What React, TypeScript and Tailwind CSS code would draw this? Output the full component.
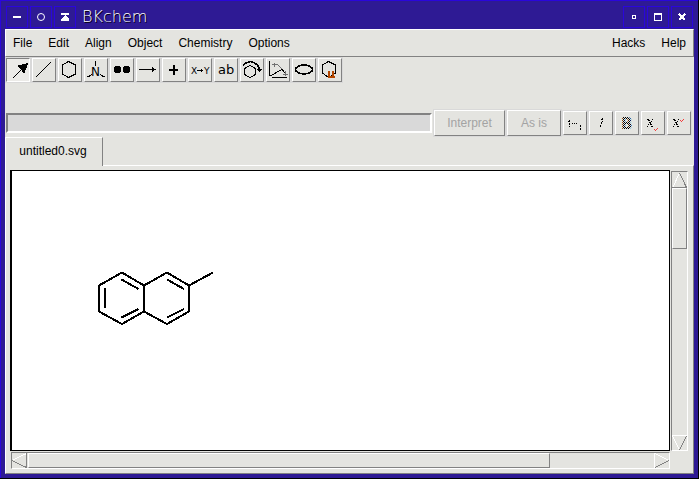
import React from "react";

type Children = { children?: React.ReactNode };

const raised = "border border-t-white border-l-white border-r-[#828282] border-b-[#828282]";
const sunken = "border border-t-[#828282] border-l-[#828282] border-r-white border-b-white";
const halo = "shadow-[0_0_0_1px_#d9d9d9]";

function TitleButton({ label, children }: Children & { label: string }) {
  return (
    <button aria-label={label} className="size-[22px] shrink-0 border border-[#2a06dc]">
      <svg viewBox="0 0 20 20" className="size-5" fill="none" stroke="white" shapeRendering="crispEdges">
        {children}
      </svg>
    </button>
  );
}

function ToolButton({ label, pressed = false, children }: Children & { label: string; pressed?: boolean }) {
  return (
    <button aria-label={label} aria-pressed={pressed} className={`size-6 shrink-0 ${halo} ${pressed ? sunken + " bg-[#ecebe8]" : raised}`}>
      <svg viewBox="0 0 22 22" className="size-[22px]" fill="none" stroke="black" shapeRendering="crispEdges">
        {children}
      </svg>
    </button>
  );
}

function IconText({ x, y, size, fill = "black", bold = false, children }: Children & { x: number; y: number; size: number; fill?: string; bold?: boolean }) {
  return (
    <text x={x} y={y} fontSize={size} fill={fill} stroke="none" fontWeight={bold ? 700 : 400} fontFamily="DejaVu Sans, sans-serif">
      {children}
    </text>
  );
}

function MenuItem({ children }: Children) {
  return <button className="h-6 px-[7px]">{children}</button>;
}

function Toolbar() {
  return (
    <div role="toolbar" className="flex h-[53px] items-start gap-[2px] pt-px pl-px">
      <ToolButton label="Edit" pressed>
        <path d="M5.5 19.5 L15 10" />
        <path d="M20.5 4.5 L11 7 L13 9 L15 11 L17 14 Z" fill="black" />
      </ToolButton>
      <ToolButton label="Draw bond">
        <path d="M3 18 L18 3" />
      </ToolButton>
      <ToolButton label="Template">
        <path d="M9.5 2.5 L16.5 6 V15 L9.5 18.5 L3.5 15 V6 Z" />
      </ToolButton>
      <ToolButton label="Atom">
        <path d="M10.5 2 V7" />
        <IconText x={6} y={17} size={12}>N</IconText>
        <path d="M2 18 L7 15.5 M2 17.5 H5 M4 16.5 H6 M15 15.5 L20 18 M17 17.5 H20 M16 16.5 H18" />
      </ToolButton>
      <ToolButton label="Mark">
        <g fill="black" stroke="none">
          <circle cx="6.5" cy="10.5" r="3.7" />
          <circle cx="15.5" cy="10.5" r="3.7" />
        </g>
      </ToolButton>
      <ToolButton label="Arrow">
        <path d="M2 10.5 H18" />
        <path d="M15 8 L19 10.5 L15 13 Z" fill="black" stroke="none" />
      </ToolButton>
      <ToolButton label="Plus">
        <path d="M6 11 H15 M11 6 V16" strokeWidth="2" />
      </ToolButton>
      <ToolButton label="Reaction">
        <IconText x={2} y={15} size={9}>X</IconText>
        <IconText x={15} y={15} size={9}>Y</IconText>
        <path d="M8 11.5 H14 M12.5 10 V13" />
      </ToolButton>
      <ToolButton label="Text">
        <IconText x={3} y={15} size={13}>ab</IconText>
      </ToolButton>
      <ToolButton label="Rotate">
        <path d="M9 6.5 L14.5 9.5 V15.5 L9 18.5 L3.5 15.5 V9.5 Z" />
        <path d="M2 6.5 C5 2.5 10 2 13 3.5 Q17 5.5 18.5 10" strokeWidth="1.5" />
        <path d="M16 10 H21 L18.5 13 Z" fill="black" stroke="none" />
      </ToolButton>
      <ToolButton label="Bond align">
        <path d="M2.5 2 V17 M5 18.5 H20 M3 17 L15 10.5 L19 15" />
        <path d="M5 5.5 H10 Q13 7 14.5 10 M18.5 12 V17 M16 15.5 H21 M7.5 4 V8" stroke="#707070" />
      </ToolButton>
      <ToolButton label="Vector graphics">
        <ellipse cx="11" cy="10.5" rx="8.5" ry="4.5" strokeWidth="1.5" />
      </ToolButton>
      <ToolButton label="User templates">
        <path d="M9.5 2.5 L16.5 6 V14 L9.5 18.5 L3.5 14 V6 Z" />
        <path d="M10 12 V18 H14 V12 M13 18 H16" stroke="#b54700" strokeWidth="2" />
      </ToolButton>
    </div>
  );
}

function EditRow() {
  const action = `h-[26px] shrink-0 text-[#a3a3a3] ${halo} ${raised}`;
  return (
    <div className="flex h-[26px] items-center gap-[2px] pl-px pr-[3px]">
      <input aria-label="Edit text" className="h-5 min-w-0 flex-1 border-2 border-t-[#828282] border-l-[#828282] border-r-white border-b-white bg-[#d9d9d9] outline-none" />
      <button className={`w-[71px] ${action}`}>Interpret</button>
      <button className={`w-[54px] ${action}`}>As is</button>
      <ToolButton label="Number">
        <path d="M5.5 8 V15 M4 9.5 H6 M16.5 13 V19" strokeDasharray="2 1" />
        <path d="M8 11.5 H14" strokeDasharray="1 1" />
      </ToolButton>
      <ToolButton label="Italic">
        <path d="M12.5 6 V10 M11.5 10 V13 M10.5 13 V16 M11 7.5 H13" strokeDasharray="2 1" />
      </ToolButton>
      <ToolButton label="Bold">
        <defs>
          <pattern id="stipple" width="2" height="2" patternUnits="userSpaceOnUse">
            <path d="M0 0 H1 V1 H0 Z M1 1 H2 V2 H1 Z" fill="black" stroke="none" />
          </pattern>
        </defs>
        <IconText x={5} y={17} size={15} fill="url(#stipple)" bold>B</IconText>
      </ToolButton>
      <ToolButton label="Subscript">
        <path d="M5 7.5 H7 M6 8.5 H8 M7 10.5 H9 M8 12.5 H10 M9 14.5 H11 M10 7.5 H11 M9 9.5 H10 M8 11.5 H9 M6 12.5 H7 M5 14.5 H6" />
        <path d="M12 17.5 H13 M13 18.5 H14 M14 17.5 H15 M15 16.5 H16" stroke="#f43c3c" />
      </ToolButton>
      <ToolButton label="Superscript">
        <path d="M5 7.5 H7 M6 8.5 H8 M7 10.5 H9 M8 12.5 H10 M9 14.5 H11 M10 7.5 H11 M9 9.5 H10 M8 11.5 H9 M6 12.5 H7 M5 14.5 H6" />
        <path d="M12 8.5 H13 M13 9.5 H14 M14 8.5 H15 M15 7.5 H16" stroke="#f43c3c" />
      </ToolButton>
    </div>
  );
}

function ScrollArrow({ label, light, dark, box }: { label: string; light: string; dark: string; box: string }) {
  return (
    <button aria-label={label} className={`shrink-0 ${box}`}>
      <svg viewBox="0 0 15 15" className="size-[15px]" fill="none" shapeRendering="crispEdges">
        <path d={light} stroke="white" />
        <path d={dark} stroke="#828282" />
      </svg>
    </button>
  );
}

function Drawing() {
  return (
    <svg role="img" aria-label="2-methylnaphthalene" viewBox="12 171 230 170" className="h-[170px] w-[230px]" fill="none" stroke="black" strokeWidth="2" shapeRendering="crispEdges">
      <path d="M99 285.5 L122 272.5 L144 285.5 V311.5 L122 324 L99 311.5 Z" />
      <path d="M144 285.5 L167 272.5 L189 285.5 V311.5 L167 324 L144 311.5 M189 285.5 L213 272.5" />
      <path d="M105 288 V308 M121.5 279.5 L138.5 289 M121.5 317.5 L138.5 309 M167 279.5 L184 289 M167 317.5 L184 309" />
    </svg>
  );
}

export default function App() {
  return (
    <div className="flex h-screen flex-col border-r border-b border-black bg-[#2e1a94] font-['Liberation_Sans',Arial,sans-serif] text-xs text-black">
      <div className="flex min-h-0 flex-1 flex-col border-t border-l border-[#2a06dc] pr-1 pb-1 pl-1">
        <header className="flex h-7 shrink-0 items-center gap-[2px] pt-[3px] pr-px pl-px">
          <TitleButton label="Window menu">
            <path d="M6 10 H14" strokeWidth="2" />
          </TitleButton>
          <TitleButton label="Sticky">
            <circle cx="10" cy="10" r="3.5" shapeRendering="auto" />
          </TitleButton>
          <TitleButton label="Shade">
            <path d="M6 7 H14" strokeWidth="2" />
            <path d="M10 8 L14 12 V14 H6 V12 Z" fill="white" stroke="none" />
          </TitleButton>
          <h1 className="flex-1 pl-1 font-['DejaVu_Sans_Light','DejaVu_Sans',sans-serif] text-base leading-5 font-extralight text-white [text-shadow:1px_1px_0_black]">BKchem</h1>
          <TitleButton label="Minimize">
            <path d="M8.5 8.5 H11.5 V11.5 H8.5 Z" />
          </TitleButton>
          <TitleButton label="Maximize">
            <path d="M6.5 6.5 H13.5 V13.5 H6.5 Z M6 7.5 H14" />
          </TitleButton>
          <TitleButton label="Close">
            <path d="M7 7 L13 13 M13 7 L7 13" strokeWidth="2" />
          </TitleButton>
        </header>
        <main className="flex min-h-0 flex-1 flex-col bg-[#e4e4e0]">
          <nav className={`flex h-7 shrink-0 items-center gap-[2px] ${raised}`}>
            <MenuItem>File</MenuItem>
            <MenuItem>Edit</MenuItem>
            <MenuItem>Align</MenuItem>
            <MenuItem>Object</MenuItem>
            <MenuItem>Chemistry</MenuItem>
            <MenuItem>Options</MenuItem>
            <span className="flex-1" />
            <MenuItem>Hacks</MenuItem>
            <MenuItem>Help</MenuItem>
          </nav>
          <Toolbar />
          <EditRow />
          <div role="tablist" className="relative -mb-px flex shrink-0 pt-px">
            <button role="tab" aria-selected className="h-[29px] w-[98px] border border-t-white border-r-[#828282] border-b-0 border-l-white bg-[#e4e4e0] pr-[2px] pb-[2px]">untitled0.svg</button>
          </div>
          <section className={`grid min-h-0 flex-1 grid-cols-[minmax(0,1fr)_18px] grid-rows-[minmax(0,1fr)_18px] gap-px pt-1 pr-1 pb-[3px] pl-1 ${raised}`}>
            <div className="overflow-hidden border border-l-2 border-black bg-white">
              <Drawing />
            </div>
            <div className={`mt-px mr-px flex flex-col ${sunken}`}>
              <ScrollArrow label="Scroll up" box="h-4" light="M0.5 15 L7.5 0" dark="M7.5 0 L14.5 14.5 M0 14.5 H15" />
              <div className={`h-[61px] w-[15px] ${raised}`} />
              <span className="flex-1" />
              <ScrollArrow label="Scroll down" box="h-[15px]" light="M0 0.5 H15 M0.5 1 L7.5 15" dark="M14.5 1 L7.5 15" />
            </div>
            <div className={`mb-px ml-px flex ${sunken}`}>
              <ScrollArrow label="Scroll left" box="w-4" light="M0 7.5 L14.5 0.5" dark="M0 7.5 L14.5 14.5 M14.5 0 V15" />
              <div className={`h-[15px] w-[79.5%] ${raised}`} />
              <span className="flex-1" />
              <ScrollArrow label="Scroll right" box="w-[15px]" light="M0.5 0 V15 M1 0.5 L15 7.5" dark="M15 7.5 L1 14.5" />
            </div>
          </section>
        </main>
      </div>
    </div>
  );
}
